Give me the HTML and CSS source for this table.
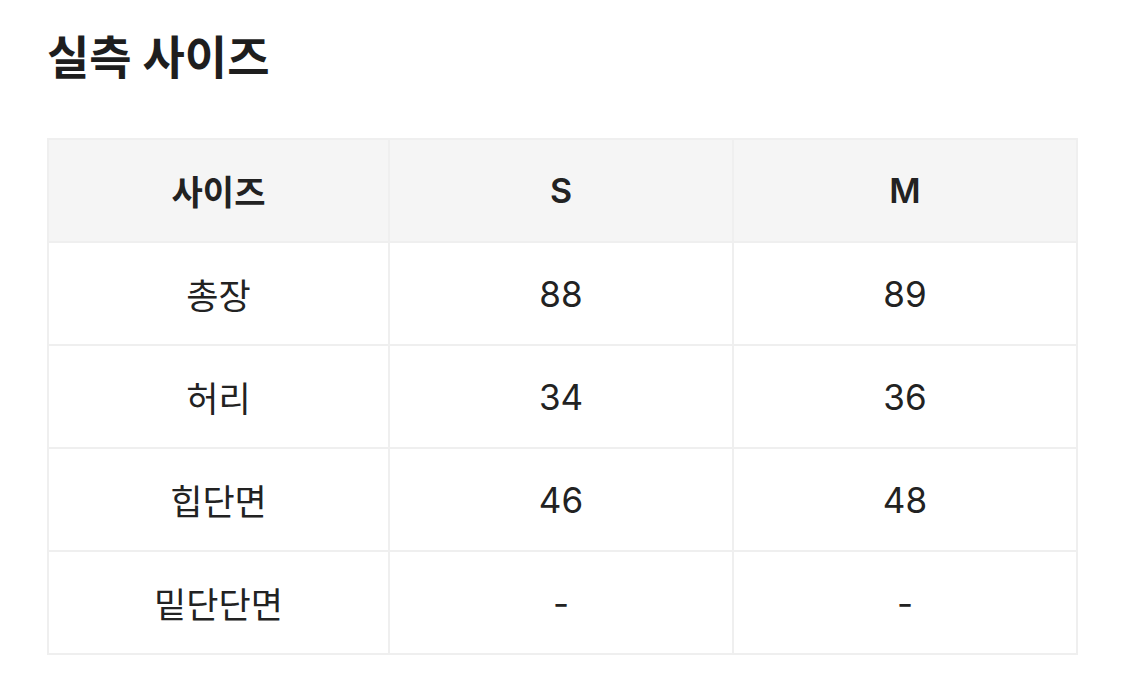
FILE: index.html
```html
<!DOCTYPE html>
<html lang="ko">
<head>
<meta charset="utf-8">
<link rel="stylesheet" href="styles.css">
</head>
<body>
<div class="page">
  <h1 class="title">실측 사이즈</h1>
  <table class="size-table">
    <colgroup>
      <col class="col-label">
      <col class="col-size">
      <col class="col-size">
    </colgroup>
    <thead>
      <tr><th>사이즈</th><th>S</th><th>M</th></tr>
    </thead>
    <tbody>
      <tr><td>총장</td><td>88</td><td>89</td></tr>
      <tr><td>허리</td><td>34</td><td>36</td></tr>
      <tr><td>힙단면</td><td>46</td><td>48</td></tr>
      <tr><td>밑단단면</td><td>-</td><td>-</td></tr>
    </tbody>
  </table>
</div>
</body>
</html>
```

FILE: styles.css
```css
html, body {
  margin: 0;
  padding: 0;
  background: #fff;
}
body {
  font-family: "Inter", "Noto Sans CJK KR", sans-serif;
  color: #222;
}
.page {
  padding: 20px 47px 0 47px;
}
.title {
  margin: 0;
  font-size: 46px;
  font-weight: 700;
  line-height: 74px;
  color: #1e1e1e;
}
.size-table {
  margin-top: 44px;
  width: 1029px;
  border-collapse: collapse;
  table-layout: fixed;
}
.col-label {
  width: 341px;
}
.col-size {
  width: 344px;
}
.size-table th,
.size-table td {
  border: 2px solid #efefef;
  height: 101px;
  padding: 0;
  text-align: center;
  vertical-align: middle;
  font-size: 35px;
}
.size-table th {
  background: #f5f5f5;
  font-weight: 600;
  font-size: 34px;
}
.size-table td {
  font-weight: 400;
}
```
